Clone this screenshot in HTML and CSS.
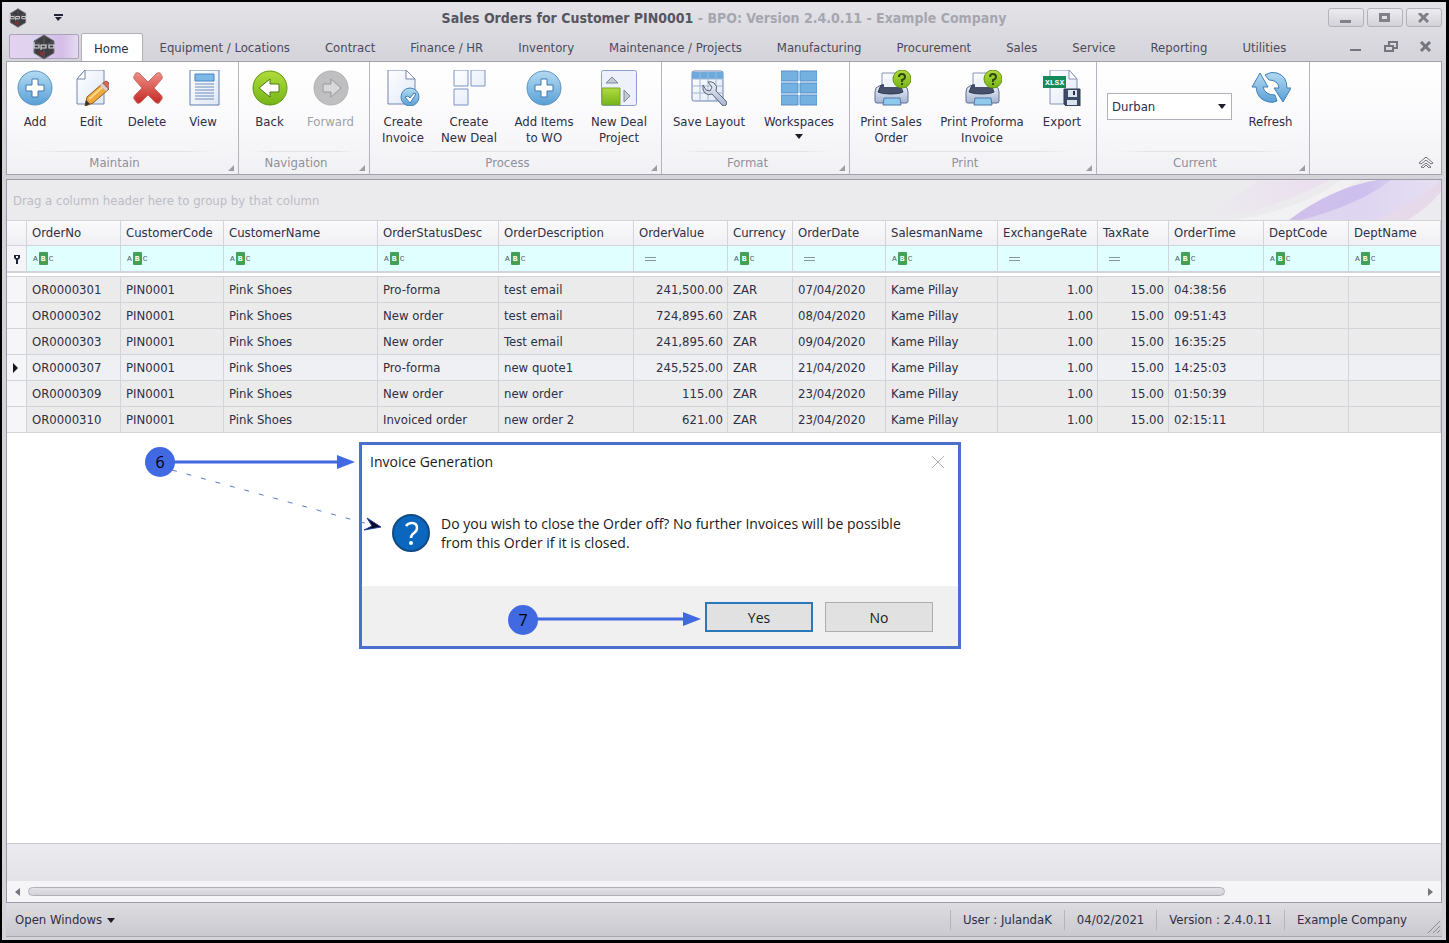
FILE: index.html
```html
<!DOCTYPE html>
<html lang="en">
	<head>
		<meta charset="UTF-8">
		<title>Sales Orders for Customer PIN0001</title>
		<link rel="stylesheet" href="styles.css">
	</head>
	<body>
		<!-- shared gradients and symbols -->
		<svg class="defs" width="0" height="0" aria-hidden="true">
			<defs>
				<linearGradient id="blue" x1="0" y1="0" x2="0" y2="1"><stop offset="0" stop-color="#b4dbf2"/><stop offset="1" stop-color="#5a9fd6"/></linearGradient>
				<linearGradient id="green" x1="0" y1="0" x2="0" y2="1"><stop offset="0" stop-color="#b0dc3c"/><stop offset="1" stop-color="#76b416"/></linearGradient>
				<linearGradient id="red" x1="0" y1="0" x2="0" y2="1"><stop offset="0" stop-color="#ee8f86"/><stop offset="1" stop-color="#c32a24"/></linearGradient>
				<linearGradient id="paper" x1="0" y1="0" x2="1" y2="1"><stop offset="0" stop-color="#fff"/><stop offset="1" stop-color="#dfe7f7"/></linearGradient>
				<linearGradient id="steel" x1="0" y1="0" x2="0" y2="1"><stop offset="0" stop-color="#eef2fa"/><stop offset="1" stop-color="#a5b4d0"/></linearGradient>
			</defs>
			<symbol id="logo" viewBox="0 0 24 26">
				<path d="M12 1 22 7v12l-10 6L2 19V7z" fill="#3d3d42" stroke="#77777c"/>
				<path d="M12 1v11L2 7M12 12l10-5M12 13v12" stroke="#5b5b60" fill="none"/>
				<path d="M2 8v6h5v-3H2M9 11h5v3H9v2M9 11v4M17 11h5v3h-5z" fill="none" stroke="#d8d8dc" stroke-width="1.2"/>
				<path d="m8 18 2 3 2-3" fill="none" stroke="#a52a2a" stroke-width="1.4"/>
			</symbol>
			<symbol id="add" viewBox="0 0 36 36">
				<circle cx="18" cy="18" r="17" fill="url(#blue)" stroke="#5b93c4"/>
				<path d="M15 9h6v6h6v6h-6v6h-6v-6H9v-6h6z" fill="#fff" stroke="#3f78b0"/>
			</symbol>
			<symbol id="printer" viewBox="0 0 40 36">
				<path d="M11 3h17v15H11z" fill="url(#paper)" stroke="#8694b4"/>
				<path d="M4 22q0-5 4-6l3-1h18l4 1q4 1 4 6v9q0 2-2 2H6q-2 0-2-2z" fill="url(#steel)" stroke="#5c6f98"/>
				<path d="M10 15h19l3 7q-3 2-12 2T7 22z" fill="#46506b" stroke="#343c55"/>
				<path d="M13 9h14v8H13z" fill="#eef2fb"/>
				<path d="M13 28h16l1 7H12z" fill="#90c9ee" stroke="#5279a8"/>
				<circle cx="31" cy="9" r="9" fill="url(#green)" stroke="#63930f"/>
				<path d="M28 7q0-3 3-3t3 3q0 2-3 3v2" fill="none" stroke="#33450b" stroke-width="2"/>
				<path d="M30 13h2v2h-2z" fill="#33450b"/>
			</symbol>
			<symbol id="doc" viewBox="0 0 36 36">
				<path d="M5 1h19l8 8v26H5z" fill="url(#paper)" stroke="#7487b0"/>
				<path d="M24 1v8h8z" fill="#fff" stroke="#7487b0"/>
			</symbol>
		</svg>

		<div class="window">
			<header class="titlebar">
				<div class="quick">
					<svg width="20" height="20"><use href="#logo"/></svg>
					<svg width="10" height="8" viewBox="0 0 10 8"><path d="M0 0h9v2H0zM1 3h7L4 7z" fill="#23233a"/></svg>
				</div>
				<h1><b>Sales Orders for Customer PIN0001</b> - BPO: Version 2.4.0.11 - Example Company</h1>
				<div class="controls">
					<button type="button" aria-label="Minimize"><svg width="12" height="10" viewBox="0 0 12 10"><path d="M0 7h11v3H0z" fill="#80808a"/></svg></button>
					<button type="button" aria-label="Maximize"><svg width="12" height="10" viewBox="0 0 12 10"><path d="M1.500 1.500h8v6h-8z" fill="none" stroke="#80808a" stroke-width="3"/></svg></button>
					<button type="button" aria-label="Close"><svg width="12" height="10" viewBox="0 0 12 10"><path d="m1 0 9 9M10 0 1 9" stroke="#80808a" stroke-width="3"/></svg></button>
				</div>
			</header>

			<nav class="tabs">
				<button type="button" class="app" aria-label="Application menu"><svg width="24" height="26"><use href="#logo"/></svg></button>
				<a href="#" class="active">Home</a>
				<a href="#">Equipment / Locations</a>
				<a href="#">Contract</a>
				<a href="#">Finance / HR</a>
				<a href="#">Inventory</a>
				<a href="#">Maintenance / Projects</a>
				<a href="#">Manufacturing</a>
				<a href="#">Procurement</a>
				<a href="#">Sales</a>
				<a href="#">Service</a>
				<a href="#">Reporting</a>
				<a href="#">Utilities</a>
				<div class="child">
					<button type="button" aria-label="Minimize child"><svg width="14" height="12" viewBox="0 0 14 12"><path d="M1 8h11v2H1z" fill="#75757f"/></svg></button>
					<button type="button" aria-label="Restore child"><svg width="14" height="12" viewBox="0 0 14 12"><path d="M5 4V1h8v6h-3M1 5h8v5H1z" fill="none" stroke="#75757f" stroke-width="2"/></svg></button>
					<button type="button" aria-label="Close child"><svg width="14" height="12" viewBox="0 0 14 12"><path d="m2 1 9 9M11 1l-9 9" stroke="#75757f" stroke-width="3"/></svg></button>
				</div>
			</nav>

			<div class="ribbon">
				<section class="group maintain">
					<div class="items">
						<button type="button"><svg width="36" height="36"><use href="#add"/></svg>Add</button>
						<button type="button"><svg width="36" height="36" viewBox="0 0 36 36">
							<path d="M12 0h19v34H4V9z" fill="url(#paper)" stroke="#7487b0"/><path d="M12 0v9H4z" fill="#fff" stroke="#7487b0"/>
							<path d="m12 36 2-9 16-14 6 6-16 14z" fill="#f0a93c" stroke="#8e5d25"/><path d="m16 29 16-14" stroke="#fbd98c" stroke-width="2"/>
							<path d="m30 13 3-2q4 1 4 6l-2 2z" fill="#d8665e" stroke="#954"/><path d="m27 15 6 6 2-2-6-6z" fill="#c9d2de"/><path d="m12 36 1-6 4 4z" fill="#333"/>
						</svg>Edit</button>
						<button type="button"><svg width="36" height="36" viewBox="0 0 36 36"><path d="M7 3q2-1 4 1l8 8 8-8q2-2 4-1l2 3q1 2-1 4l-7 8 7 7q2 2 1 4l-3 4q-2 1-4-1l-7-7-7 7q-2 2-4 1l-3-4q-1-2 1-4l7-7-7-8q-2-2-1-4z" fill="url(#red)" stroke="#cf6a62"/></svg>Delete</button>
						<button type="button"><svg width="36" height="36" viewBox="0 0 36 36"><path d="M5 0h29v35H5z" fill="url(#paper)" stroke="#5f7fae"/><path d="M10 4h19v7H10z" fill="#7db9e6" stroke="#4d86bd"/><path d="M10 14h19M10 17h19M10 20h19M10 23h19M10 26h19M10 29h19" stroke="#6d8cb8"/></svg>View</button>
					</div>
					<footer>Maintain</footer>
				</section>
				<section class="group navigation">
					<div class="items">
						<button type="button"><svg width="36" height="36" viewBox="0 0 36 36"><circle cx="18" cy="18" r="17" fill="url(#green)" stroke="#5f9412"/><path d="m7 18 11-9v5h9v8h-9v5z" fill="#fff" stroke="#4d7a10"/></svg>Back</button>
						<button type="button" disabled><svg width="36" height="36" viewBox="0 0 36 36"><circle cx="18" cy="18" r="17" fill="#bfbfc1" stroke="#b2b2b5"/><path d="m28 18-10-9v5h-8v8h8v5z" fill="#d8d8da" stroke="#98989c"/></svg>Forward</button>
					</div>
					<footer>Navigation</footer>
				</section>
				<section class="group process">
					<div class="items">
						<button type="button"><svg width="36" height="36" viewBox="0 0 36 36"><path d="M3 0h18l9 9v25H3z" fill="url(#paper)" stroke="#7487b0"/><path d="M21 0v9h9z" fill="#fff" stroke="#7487b0"/><circle cx="25" cy="27" r="9" fill="url(#blue)" stroke="#4682b8"/><path d="m20 27 3-1 2 2 4-5 2 1-6 9z" fill="#fff" stroke="#3f78b0"/></svg>Create<br>Invoice</button>
						<button type="button"><svg width="36" height="36" viewBox="0 0 36 36"><path d="M3 0h14v16H3zM20 0h14v16H20zM3 19h14v16H3z" fill="url(#paper)" stroke="#7c92c4"/></svg>Create<br>New Deal</button>
						<button type="button"><svg width="36" height="36"><use href="#add"/></svg>Add Items<br>to WO</button>
						<button type="button"><svg width="36" height="36" viewBox="0 0 36 36"><rect x="0.500" y="0.500" width="35" height="35" rx="2" fill="#eef1fa" stroke="#8c9ecb"/><path d="M1 18h18v17H1z" fill="url(#green)" stroke="#7ba536"/><path d="m5 13 6-6 6 6zM23 20l6 6-6 6z" fill="#c3cad6" stroke="#7c879b"/></svg>New Deal<br>Project</button>
					</div>
					<footer>Process</footer>
				</section>
				<section class="group format">
					<div class="items">
						<button type="button"><svg width="36" height="36" viewBox="0 0 36 36">
							<rect x="1" y="1" width="31" height="30" rx="2" fill="url(#paper)" stroke="#6c82b4"/><path d="M1 2h31v7H1z" fill="#6aaadd"/><path d="M1 9h31M1 16h31M1 23h31M9 2v29M17 2v29M25 2v29" stroke="#a3b5d6"/>
							<path d="M12 15q-1 6 2 8 3 3 7 1l10 11q3 2 4 0 2-2 0-4L25 21q2-5-2-8-3-2-6-1l4 5-2 4-4-1z" fill="url(#steel)" stroke="#5b6272"/>
						</svg>Save Layout</button>
						<button type="button"><svg width="36" height="36" viewBox="0 0 36 36"><path d="M0 1h17v10H0zM19 1h17v10H19zM0 13h17v10H0zM19 13h17v10H19zM0 25h17v10H0zM19 25h17v10H19z" fill="#74b0e0" stroke="#5590c8"/></svg>Workspaces<i class="caret"></i></button>
					</div>
					<footer>Format</footer>
				</section>
				<section class="group print">
					<div class="items">
						<button type="button"><svg width="40" height="36"><use href="#printer"/></svg>Print Sales<br>Order</button>
						<button type="button"><svg width="40" height="36"><use href="#printer"/></svg>Print Proforma<br>Invoice</button>
						<button type="button"><svg width="40" height="36" viewBox="0 0 40 36">
							<path d="M8 0h19l8 9v25H8z" fill="url(#paper)" stroke="#8694b4"/><path d="M27 0v9h8z" fill="#fff" stroke="#8694b4"/>
							<path d="M1 6h23v12H1z" fill="#178a5a"/><text x="3" y="15" class="xlsx">XLSX</text>
							<path d="M22 19h16v17H24l-2-2z" fill="#3d4c66" stroke="#2f3b52"/><path d="M26 20h9v7h-9z" fill="#dbe3ef"/><path d="M31 21h2v4h-2z" fill="#26324a"/><path d="M25 30h10v5H25z" fill="#dbe3ef"/>
						</svg>Export</button>
					</div>
					<footer>Print</footer>
				</section>
				<section class="group current">
					<div class="items">
						<label class="site"><select aria-label="Site"><option>Durban</option></select></label>
						<button type="button"><svg width="40" height="36" viewBox="0 0 40 36">
							<path d="M9 3 17 17h-5q2 8 12 8l2 6q-4 2-8 1Q6 30 5 17H1z" fill="url(#blue)" stroke="#4181b8"/>
							<path d="M14 5q6-4 12-2 10 3 10 15h4l-8 14-9-14h5q-1-8-10-8z" fill="url(#blue)" stroke="#4181b8"/>
						</svg>Refresh</button>
					</div>
					<footer>Current</footer>
				</section>
				<button type="button" class="collapse" aria-label="Collapse the ribbon"><svg width="16" height="12" viewBox="0 0 16 12"><path d="m1 7 7-6 7 6-2 1-5-4-5 4zm2 4 5-4 5 4-2 1-3-3-3 3z" fill="#fff" stroke="#70707a"/></svg></button>
			</div>

			<main class="grid">
				<div class="grouping">
					<p>Drag a column header here to group by that column</p>
					<svg width="240" height="40" viewBox="0 0 240 40" aria-hidden="true">
						<defs>
							<linearGradient id="pink" x1="0" x2="1"><stop offset="0" stop-color="#ecebf0"/><stop offset="1" stop-color="#ead3ee"/></linearGradient>
							<linearGradient id="violet" x1="0" x2="1"><stop offset="0" stop-color="#cfc0ea"/><stop offset="0.500" stop-color="#cdbfee"/><stop offset="1" stop-color="#e6e2f0"/></linearGradient>
						</defs>
						<path d="M0 40Q70 32 128 0h-70Q30 20 0 40z" fill="url(#pink)" opacity="0.500"/>
						<path d="M30 40Q100 30 140 0H160Q130 14 88 40z" fill="#f1f1f4"/>
						<path d="M88 40Q130 8 176 0h64v40z" fill="url(#violet)"/>
						<path d="M100 40q60-16 90-40h50v2Q196 40 176 40z" fill="#e5def2" opacity="0.700"/>
						<path d="M176 40Q210 26 240 0v40z" fill="#e6d9ea"/>
						<path d="M206 40Q224 30 240 12v28z" fill="#ecebf0"/>
					</svg>
				</div>
				<table>
					<colgroup>
						<col class="c-mark"><col class="c-no"><col class="c-code"><col class="c-name"><col class="c-status"><col class="c-desc"><col class="c-value"><col class="c-cur"><col class="c-date"><col class="c-sales"><col class="c-exch"><col class="c-tax"><col class="c-time"><col class="c-dept"><col>
					</colgroup>
					<thead>
						<tr>
							<td></td><th>OrderNo</th><th>CustomerCode</th><th>CustomerName</th><th>OrderStatusDesc</th><th>OrderDescription</th><th>OrderValue</th><th>Currency</th><th>OrderDate</th><th>SalesmanName</th><th>ExchangeRate</th><th>TaxRate</th><th>OrderTime</th><th>DeptCode</th><th>DeptName</th>
						</tr>
						<tr class="filter">
							<td><svg width="8" height="10" viewBox="0 0 8 10"><path d="M1 1h6v3L5 6v4H3V6L1 4z" fill="#23233a"/><path d="M3 2h2v2H3z" fill="#fff"/></svg></td>
							<td><span class="abc">A<b>B</b>C</span></td>
							<td><span class="abc">A<b>B</b>C</span></td>
							<td><span class="abc">A<b>B</b>C</span></td>
							<td><span class="abc">A<b>B</b>C</span></td>
							<td><span class="abc">A<b>B</b>C</span></td>
							<td><i class="equals"></i></td>
							<td><span class="abc">A<b>B</b>C</span></td>
							<td><i class="equals"></i></td>
							<td><span class="abc">A<b>B</b>C</span></td>
							<td><i class="equals"></i></td>
							<td><i class="equals"></i></td>
							<td><span class="abc">A<b>B</b>C</span></td>
							<td><span class="abc">A<b>B</b>C</span></td>
							<td><span class="abc">A<b>B</b>C</span></td>
						</tr>
						<tr class="split"><td colspan="15"></td></tr>
					</thead>
					<tbody>
						<tr><td></td><td>OR0000301</td><td>PIN0001</td><td>Pink Shoes</td><td>Pro-forma</td><td>test email</td><td class="num">241,500.00</td><td>ZAR</td><td>07/04/2020</td><td>Kame Pillay</td><td class="num">1.00</td><td class="num">15.00</td><td>04:38:56</td><td></td><td></td></tr>
						<tr><td></td><td>OR0000302</td><td>PIN0001</td><td>Pink Shoes</td><td>New order</td><td>test email</td><td class="num">724,895.60</td><td>ZAR</td><td>08/04/2020</td><td>Kame Pillay</td><td class="num">1.00</td><td class="num">15.00</td><td>09:51:43</td><td></td><td></td></tr>
						<tr><td></td><td>OR0000303</td><td>PIN0001</td><td>Pink Shoes</td><td>New order</td><td>Test email</td><td class="num">241,895.60</td><td>ZAR</td><td>09/04/2020</td><td>Kame Pillay</td><td class="num">1.00</td><td class="num">15.00</td><td>16:35:25</td><td></td><td></td></tr>
						<tr class="focused"><td><svg width="6" height="10" viewBox="0 0 6 10"><path d="m0 0 5 5-5 5z" fill="#16161f"/></svg></td><td>OR0000307</td><td>PIN0001</td><td>Pink Shoes</td><td>Pro-forma</td><td>new quote1</td><td class="num">245,525.00</td><td>ZAR</td><td>21/04/2020</td><td>Kame Pillay</td><td class="num">1.00</td><td class="num">15.00</td><td>14:25:03</td><td></td><td></td></tr>
						<tr><td></td><td>OR0000309</td><td>PIN0001</td><td>Pink Shoes</td><td>New order</td><td>new order</td><td class="num">115.00</td><td>ZAR</td><td>23/04/2020</td><td>Kame Pillay</td><td class="num">1.00</td><td class="num">15.00</td><td>01:50:39</td><td></td><td></td></tr>
						<tr><td></td><td>OR0000310</td><td>PIN0001</td><td>Pink Shoes</td><td>Invoiced order</td><td>new order 2</td><td class="num">621.00</td><td>ZAR</td><td>23/04/2020</td><td>Kame Pillay</td><td class="num">1.00</td><td class="num">15.00</td><td>02:15:11</td><td></td><td></td></tr>
					</tbody>
				</table>
				<div class="summary"></div>
				<div class="scrollbar">
					<svg width="5" height="8" viewBox="0 0 5 8"><path d="M5 0v8L0 4z" fill="#75757f"/></svg>
					<div class="track"><div class="thumb"></div></div>
					<svg width="5" height="8" viewBox="0 0 5 8"><path d="M0 0v8l5-4z" fill="#75757f"/></svg>
				</div>
			</main>

			<footer class="status">
				<button type="button">Open Windows<i class="caret"></i></button>
				<span>User : JulandaK</span>
				<span>04/02/2021</span>
				<span>Version : 2.4.0.11</span>
				<span>Example Company</span>
				<svg width="14" height="14" viewBox="0 0 14 14"><path d="M1 13 13 1M6 13l7-7M10 13l3-3" stroke="#8b8b95"/></svg>
			</footer>
		</div>

		<div class="dialog" role="dialog" aria-labelledby="dialog-title">
			<div class="caption">
				<h2 id="dialog-title">Invoice Generation</h2>
				<button type="button" aria-label="Close dialog"><svg width="14" height="14" viewBox="0 0 14 14"><path d="m1 1 12 12M13 1 1 13" stroke="#b4b4b4"/></svg></button>
			</div>
			<div class="message">
				<svg width="38" height="38" viewBox="0 0 38 38"><circle cx="19" cy="19" r="18" fill="#0a67bd" stroke="#114a85" stroke-width="2"/><path d="M14 12q2-3 6-3 5 0 5 5 0 3-3 5-3 2-3 5" fill="none" stroke="#fff" stroke-width="2.500"/><circle cx="19" cy="29" r="2" fill="#fff"/></svg>
				<p>Do you wish to close the Order off? No further Invoices will be possible<br>from this Order if it is closed.</p>
			</div>
			<div class="actions">
				<button type="button" class="default">Yes</button>
				<button type="button">No</button>
			</div>
		</div>

		<!-- numbered steps -->
		<svg class="steps" width="580" height="210" viewBox="0 0 580 210">
			<path d="M30 22h168" stroke="#4169e1" stroke-width="3"/>
			<path d="m193 15 18 7-18 7z" fill="#4169e1"/>
			<path d="M28 30 224 84" stroke="#5578d0" stroke-dasharray="5 10"/>
			<path d="m223 78 14 9-17 3 8-4z" fill="#05051c" stroke="#2443a0"/>
			<circle cx="16" cy="22" r="15" fill="#4169e1"/>
			<text x="16" y="28">6</text>
			<path d="M390 179h155" stroke="#4169e1" stroke-width="3"/>
			<path d="m539 172 18 7-18 7z" fill="#4169e1"/>
			<circle cx="379" cy="180" r="15" fill="#4169e1"/>
			<text x="379" y="186">7</text>
		</svg>
	</body>
</html>
```
FILE: styles.css
```css
*{
	box-sizing: border-box;
}
body{
	margin: 0;
	padding: 2px 3px 3px 2px;
	height: 100vh;
	background-color: #000;
	font-family: "DejaVu Sans Condensed", "DejaVu Sans", sans-serif;
	font-stretch: condensed;
	font-size: 13px;
	line-height: 16px;
	color: #2e2e45;
}
button{
	padding: 0;
	border: 0;
	background: none;
	font: inherit;
	color: inherit;
}
svg{
	display: block;
	flex: none;
}
.defs{
	position: absolute;
}
.window{
	display: flex;
	flex-direction: column;
	height: 100%;
	padding: 0 4px 3px;
	background: linear-gradient(#e3e3e8, #d3d3d9 60px, #d3d3d9);
}

/* title bar */
.titlebar{
	display: grid;
	grid-template-columns: 1fr auto 1fr;
	align-items: center;
	height: 31px;
}
.quick{
	display: flex;
	align-items: center;
	gap: 26px;
	padding-left: 2px;
}
.titlebar h1{
	margin: 0;
	font-size: 14px;
	color: #a6a6b0;
}
.titlebar h1 b{
	color: #55555f;
}
.controls{
	display: flex;
	justify-content: flex-end;
	gap: 3px;
}
.controls button{
	display: flex;
	align-items: center;
	justify-content: center;
	width: 36px;
	height: 19px;
	border: 1px solid #b3b3bb;
	border-radius: 3px;
	background: linear-gradient(#ececf0, #d2d2d8);
}

/* tabs */
.tabs{
	display: flex;
	height: 28px;
	flex: none;
}
.tabs a{
	padding: 7px 19px 0 16px;
	color: #4a4a5c;
	text-decoration: none;
}
.tabs .active{
	margin: 0 1px 0 2px;
	padding: 7px 13px 0 12px;
	border: 1px solid #b0b0b8;
	border-bottom: 0;
	border-radius: 2px 2px 0 0;
	background-color: #fff;
	color: #2e2e45;
}
.tabs .app{
	display: flex;
	justify-content: center;
	align-items: center;
	width: 70px;
	height: 25px;
	margin: 1px 0 0 3px;
	border: 1px solid #a9a4b8;
	border-radius: 2px;
	background: linear-gradient(90deg, #e6d2ee, #dcd3f0 35%, #d4bce6 75%, #e3dcf2);
}
.child{
	display: flex;
	gap: 21px;
	align-items: center;
	margin-left: auto;
	padding-right: 9px;
}

/* ribbon */
.ribbon{
	display: flex;
	flex: none;
	height: 114px;
	border: 1px solid #a2a2ac;
	background: linear-gradient(#fff, #fafafc 50%, #f1f1f5);
}
.group{
	display: flex;
	flex-direction: column;
	justify-content: space-between;
	border-right: 1px solid #b4b4be;
}
.items{
	display: grid;
}
.items button{
	display: flex;
	flex-direction: column;
	align-items: center;
	padding-top: 8px;
	white-space: nowrap;
	line-height: 16px;
}
.items button svg{
	margin-bottom: 8px;
}
.items button:disabled{
	color: #a0a0aa;
}
.maintain .items{
	grid-template-columns: repeat(4, 56px);
	padding-right: 7px;
}
.navigation .items{
	grid-template-columns: 61px 61px;
	padding-right: 8px;
}
.process .items{
	grid-template-columns: 66px 66px 84px 66px;
	padding-right: 9px;
}
.format .items{
	grid-template-columns: 94px 86px;
	padding-right: 7px;
}
.print .items{
	grid-template-columns: 82px 100px 60px;
	padding-right: 4px;
}
.current .items{
	grid-template-columns: 125px 77px;
	padding-left: 10px;
}
.group footer{
	position: relative;
	height: 23px;
	padding: 4px 16px 0 0;
	background: linear-gradient(90deg, transparent 10%, #e0e0e6 25%, #e0e0e6 75%, transparent 90%) top / 100% 1px no-repeat;
	text-align: center;
	color: #8f8f9b;
}
.group footer::after{
	content: "";
	position: absolute;
	right: 4px;
	bottom: 3px;
	border: 3px solid transparent;
	border-right-color: #9c9ca6;
	border-bottom-color: #9c9ca6;
}
.caret{
	border: 4px solid transparent;
	border-top: 5px solid #1c1c2a;
	border-bottom: 0;
}
.items .caret{
	margin-top: 4px;
}
.xlsx{
	font: bold 8px "Liberation Mono", monospace;
	fill: #fff;
}
.site{
	position: relative;
	margin-top: 31px;
	height: 27px;
}
.site select{
	appearance: none;
	width: 100%;
	height: 100%;
	padding: 0 4px;
	border: 1px solid #b0b0ba;
	border-radius: 0;
	background-color: #fff;
	font: inherit;
	color: inherit;
}
.site::after{
	content: "";
	position: absolute;
	right: 6px;
	top: 11px;
	border: 4px solid transparent;
	border-top: 5px solid #1c1c2a;
	border-bottom: 0;
}
.collapse{
	align-self: flex-end;
	margin: 0 7px 6px auto;
}

/* orders grid */
.grid{
	display: flex;
	flex-direction: column;
	flex: 1;
	margin-top: 4px;
	border: 1px solid #9c9ca6;
	background-color: #fff;
}
.grouping{
	display: flex;
	justify-content: space-between;
	align-items: center;
	height: 40px;
	background-color: #ebebee;
	color: #bcbcc4;
}
.grouping p{
	margin: 0;
	padding: 2px 0 0 6px;
}
table{
	width: 100%;
	table-layout: fixed;
	border-collapse: separate;
	border-spacing: 0;
}
.c-mark{ width: 20px; }
.c-no{ width: 94px; }
.c-code{ width: 103px; }
.c-name{ width: 154px; }
.c-status{ width: 121px; }
.c-desc{ width: 135px; }
.c-value{ width: 94px; }
.c-cur{ width: 65px; }
.c-date{ width: 93px; }
.c-sales{ width: 112px; }
.c-exch{ width: 100px; }
.c-tax{ width: 71px; }
.c-time{ width: 95px; }
.c-dept{ width: 85px; }
th, td{
	height: 26px;
	padding: 0 4px 0 5px;
	border-right: 1px solid #d3d3da;
	border-bottom: 1px solid #d3d3da;
	text-align: left;
	font-weight: normal;
	white-space: nowrap;
}
thead th, thead td{
	border-top: 1px solid #d3d3da;
	background: linear-gradient(#fafafb, #f0f0f4);
}
.filter td{
	border-top: 0;
	background: #e0ffff;
}
.filter td:first-child{
	background: #f5f5f8;
}
.split td{
	height: 5px;
	padding: 0;
	border-top: 1px solid #d3d3da;
	background: #fff;
}
tbody td{
	background-color: #ebebeb;
}
tbody td:first-child{
	background-color: #f6f6f9;
}
td:first-child{
	padding: 0 6px;
}
.focused td{
	background-color: #eef0f4;
}
.num{
	text-align: right;
}
.abc{
	display: flex;
	align-items: center;
	gap: 1px;
	padding-left: 1px;
	font: 8px/9px "Liberation Mono", monospace;
	color: #55606a;
}
.abc b{
	padding: 2px;
	border-radius: 1px;
	background-color: #43a057;
	color: #fff;
}
.equals{
	display: block;
	width: 11px;
	height: 4px;
	margin-left: 6px;
	border: 1px solid #8b959c;
	border-width: 1px 0;
}
.summary{
	height: 38px;
	margin-top: auto;
	border-top: 1px solid #c8c8d0;
	background: linear-gradient(#ebebef, #e3e3e8);
}
.scrollbar{
	display: flex;
	align-items: center;
	gap: 8px;
	height: 21px;
	padding: 0 8px;
	background-color: #f5f5f8;
}
.track{
	flex: 1;
}
.thumb{
	width: 86%;
	height: 9px;
	border: 1px solid #b0b0b8;
	border-radius: 5px;
	background: linear-gradient(#e2e2e6, #d2d2d8);
}

/* status bar */
.status{
	display: flex;
	align-items: center;
	flex: none;
	height: 34px;
	padding-top: 1px;
	border-bottom: 1px solid #a9a9b2;
	background: linear-gradient(#dcdce1, #c9c9cf);
}
.status button{
	display: flex;
	align-items: center;
	gap: 5px;
	margin-right: auto;
	padding-left: 9px;
}
.status span{
	padding: 2px 12px;
	border-left: 1px solid #b4b4bc;
}
.status svg{
	align-self: flex-end;
	margin: 0 1px 2px 8px;
}

/* message box */
.dialog{
	position: absolute;
	left: 359px;
	top: 442px;
	width: 602px;
	border: 3px solid #4a70cc;
	background-color: #fff;
	font-family: "Open Sans", "Noto Sans", sans-serif;
	font-stretch: normal;
	font-size: 14px;
	line-height: 19px;
	color: #1a1a1a;
}
.caption{
	display: flex;
	justify-content: space-between;
	align-items: center;
	height: 33px;
	padding: 0 13px 0 8px;
}
.caption h2{
	margin: 0;
	font-size: 14px;
	font-weight: normal;
}
.message{
	display: flex;
	gap: 11px;
	height: 108px;
	padding: 36px 0 0 30px;
}
.message p{
	margin: 0;
}
.actions{
	display: flex;
	justify-content: flex-end;
	gap: 12px;
	padding: 16px 25px 14px;
	background-color: #f0f0f0;
}
.actions button{
	width: 108px;
	height: 30px;
	border: 1px solid #adadad;
	background-color: #e1e1e1;
}
.actions .default{
	border: 2px solid #2a78bb;
}

.steps{
	position: absolute;
	left: 144px;
	top: 440px;
	pointer-events: none;
	fill: none;
}
.steps text{
	font: 16px "Open Sans", "Noto Sans", sans-serif;
	fill: #000;
	text-anchor: middle;
}
```
